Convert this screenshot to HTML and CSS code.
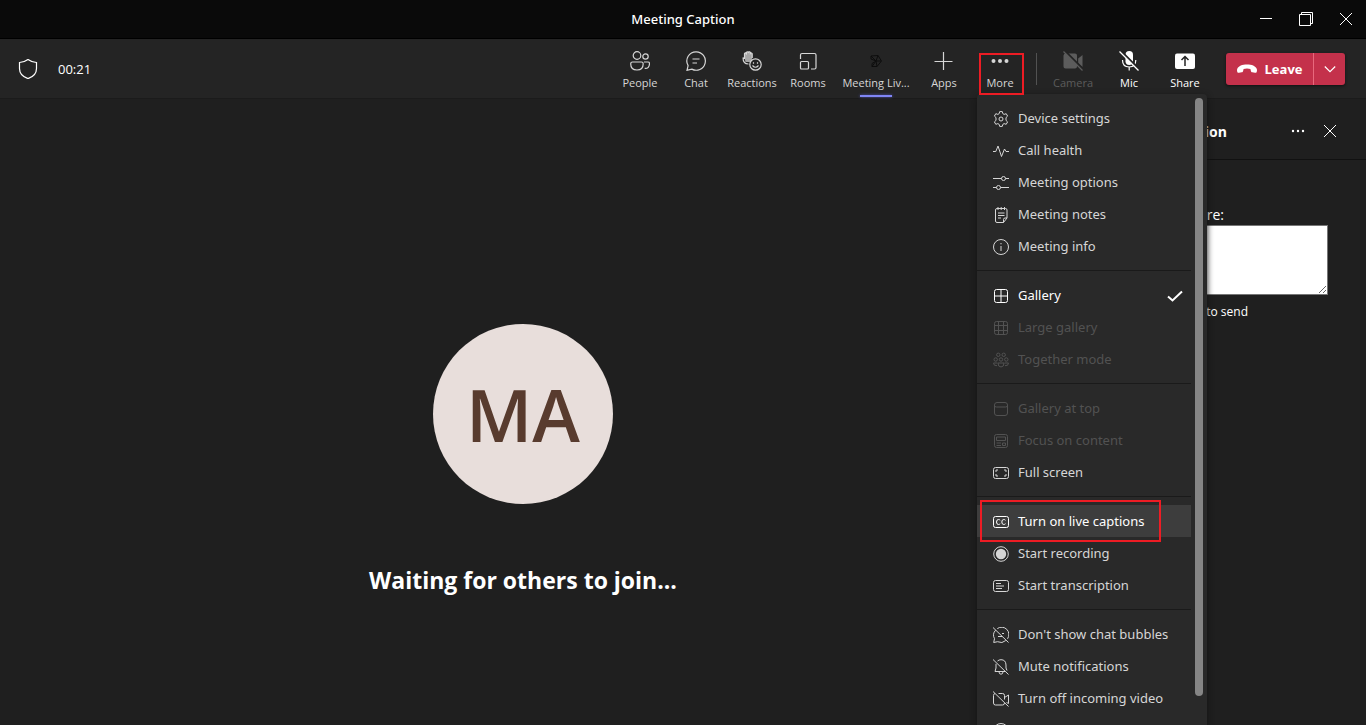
FILE: index.html
```html
<!DOCTYPE html>
<html lang="en">
<head>
<meta charset="utf-8">
<meta name="viewport" content="width=device-width, initial-scale=1">
<title>Meeting Caption</title>
<link rel="stylesheet" href="styles.css">
</head>
<body>
<div class="app">
  <header class="titlebar">
    <h1 class="titlebar-name">Meeting Caption</h1>
    <div class="window-controls">
      <button type="button" class="window-btn" aria-label="Minimize"><svg class="icon-win" viewBox="0 0 16 16"><path d="M2 7.5h12"/></svg></button>
      <button type="button" class="window-btn" aria-label="Restore"><svg class="icon-win" viewBox="0 0 16 16"><path d="M1.500 3.500h11v11h-11zM3.500 3.500v-2h11v11h-2"/></svg></button>
      <button type="button" class="window-btn" aria-label="Close"><svg class="icon-win" viewBox="0 0 16 16"><path d="M2 2l12 12M14 2L2 14"/></svg></button>
    </div>
  </header>

  <div class="toolbar">
    <svg class="icon shield" viewBox="0 0 20 20"><path d="M10 .6c2.400 1.800 5 2.700 8.500 2.900v6c0 5-3.200 8.300-8.500 10.100C4.700 17.800 1.500 14.500 1.500 9.500v-6C5 3.300 7.600 2.400 10 .6z"/></svg>
    <span class="timer">00:21</span>
    <nav class="tools" aria-label="Meeting controls">
      <button type="button" class="tool"><svg class="icon" viewBox="0 0 20 20"><circle cx="7" cy="4.500" r="3.800"/><circle cx="15.500" cy="5.500" r="2.700"/><path d="M2.500 11h9c1 0 1.700.7 1.700 1.700 0 4-2.200 6.300-6.200 6.300S.7 16.700.7 12.700C.7 11.700 1.500 11 2.500 11zM14 11h4c.9 0 1.500.6 1.500 1.500 0 3.300-1.700 5.200-4.800 4.900"/></svg>People</button>
      <button type="button" class="tool"><svg class="icon" viewBox="0 0 20 20"><path d="M10.300.8a9.200 9.200 0 1 1-4.500 17.300L1 19.300l1.100-4.700A9.200 9.200 0 0 1 10.300.8zM6.500 8h7M6.500 12h4.500"/></svg>Chat</button>
      <button type="button" class="tool"><svg class="icon" viewBox="0 0 20 20"><path class="hand" d="M2.500 7V2.500q.9-1.300 1.800 0V1.300q1-1.300 2 0V1q1-1 2 0v1q1-1 1.800.2V8l-1.500 3H3.500z"/><path d="M2.500 8V2.600q.9-1.300 1.900 0v-1.200q1-1.300 2 0q1-1.300 2 0v1.100q1-1.100 1.800.2V7M2.500 7.500L.9 6.800M1 6.500c0 4 2.200 6.500 5.500 6.500"/><circle cx="13.500" cy="13.500" r="5.700"/><path d="M10.500 14.500q3 3.500 6 0M11.500 11.200v1.500M15.500 11.200v1.500"/></svg>Reactions</button>
      <button type="button" class="tool"><svg class="icon" viewBox="0 0 20 20"><path d="M2.500 8V4Q2.500 2.500 4 2.500h12.500Q18 2.500 18 4v12.500q0 1.500-1.500 1.500H13"/><rect x="2.500" y="10.500" width="8" height="7.500" rx="1"/></svg>Rooms</button>
      <button type="button" class="tool tool-wide is-active"><svg class="icon icon-app" viewBox="0 0 20 20"><path d="M5 5l7-.5 3.500 5.500-4.500 5.500H6l4-5.500zM5 5v3l5 2h5M6 15.500v-3l4-2.500 2-5.500M11 15.500L10 10"/></svg>Meeting Liv...</button>
      <button type="button" class="tool"><svg class="icon" viewBox="0 0 20 20"><path d="M9.500 1v18M.5 10.500h18"/></svg>Apps</button>
      <button type="button" class="tool" aria-expanded="true"><svg class="icon" viewBox="0 0 20 20"><g class="solid"><circle cx="3.500" cy="10" r="2"/><circle cx="10" cy="10" r="2"/><circle cx="16.500" cy="10" r="2"/></g></svg>More<span class="mark mark-more"></span></button>
      <span class="separator"></span>
      <button type="button" class="tool" disabled><svg class="icon" viewBox="0 0 20 20"><path class="solid" d="M3 2.500h9q2 0 2 2v11q0 2-2 2H2.500q-2 0-2-2v-11q0-2 2.500-2zM15.200 7.500L19.500 4v12l-4.300-3.500z"/><path class="gap" d="M2 0l19 19"/><path d="M.5.500l19 19"/></svg>Camera</button>
      <button type="button" class="tool tool-bright"><svg class="icon" viewBox="0 0 20 20"><rect class="solid" x="6.500" y="0" width="7.500" height="14" rx="3.700"/><path d="M3.500 9c0 4.500 2.700 7 6.700 7s6.600-2.500 6.600-7M10.200 16v3.500"/><path class="gap" d="M1.500-.5l19 19"/><path d="M.5.500l19 19"/></svg>Mic</button>
      <button type="button" class="tool tool-bright"><svg class="icon" viewBox="0 0 20 20"><rect class="solid" x="0" y="2.500" width="20" height="15.500" rx="2"/><path class="cut" d="M10 15V6M6.500 9L10 5.500 13.500 9"/></svg>Share</button>
    </nav>
    <div class="leave">
      <button type="button" class="leave-main"><svg class="icon" viewBox="0 0 20 20"><path class="solid" d="M10 5.500c4.800 0 8.500 1.500 9.700 4.200.5 1.100.3 2.300 0 3.200-.3.800-.9 1-1.700.9l-2.700-.5c-.8-.2-1.200-.6-1.400-1.400l-.5-1.900c-2-.8-4.800-.8-6.800 0l-.5 1.900c-.2.800-.6 1.200-1.400 1.400L2 13.800c-.8.1-1.400-.1-1.700-.9-.3-.9-.5-2.100 0-3.200C1.500 7 5.200 5.500 10 5.500z"/></svg>Leave</button>
      <button type="button" class="leave-more" aria-label="Leave options"><svg class="icon-chevron" viewBox="0 0 12 12"><path d="M.8 3.500L6 8.700l5.200-5.200"/></svg></button>
    </div>
  </div>

  <main class="content">
    <section class="stage">
      <div class="avatar">MA</div>
      <p class="waiting">Waiting for others to join...</p>
    </section>
    <aside class="panel">
      <div class="panel-head">
        <h2 class="panel-title">Caption</h2>
        <button type="button" class="panel-btn" aria-label="More options"><svg class="icon-win" viewBox="0 0 16 16"><g class="solid"><circle cx="3" cy="8" r="1.200"/><circle cx="8" cy="8" r="1.200"/><circle cx="13" cy="8" r="1.200"/></g></svg></button>
        <button type="button" class="panel-btn" aria-label="Close panel"><svg class="icon-win" viewBox="0 0 16 16"><path d="M2 2l12 12M14 2L2 14"/></svg></button>
      </div>
      <div class="panel-body">
        <label class="panel-label" for="caption">here:</label>
        <textarea class="caption-box" id="caption"></textarea>
        <p class="panel-hint">to send</p>
      </div>
    </aside>
  </main>

  <div class="menu">
    <div class="menu-list" role="menu">
      <button type="button" role="menuitem" class="item"><svg class="icon-menu" viewBox="0 0 16 16"><path d="M6.700.6h2.600l.5 2 1.300.8 2.100-.7 1.400 2.400-1.600 1.500v2.800l1.600 1.500-1.400 2.400-2.100-.7-1.300.8-.5 2H6.700l-.5-2-1.300-.8-2.100.7-1.400-2.400L3 9.400V6.600L1.400 5.100l1.400-2.400 2.100.7 1.300-.8z"/><circle cx="8" cy="8" r="2"/></svg>Device settings</button>
      <button type="button" role="menuitem" class="item"><svg class="icon-menu" viewBox="0 0 16 16"><path d="M0 8.500h2.800L5 3l3.500 10.500L11.500 6l1.500 2.500h3"/></svg>Call health</button>
      <button type="button" role="menuitem" class="item"><svg class="icon-menu" viewBox="0 0 16 16"><path d="M0 3.500h8.500M12.500 3.500H16M0 12.500h3.500M7.500 12.500H16"/><circle cx="10.500" cy="3.500" r="2"/><circle cx="5.500" cy="12.500" r="2"/></svg>Meeting options</button>
      <button type="button" role="menuitem" class="item"><svg class="icon-menu" viewBox="0 0 16 16"><path d="M4 1.500h8.500q1.500 0 1.500 1.500v8L10.500 15.500H4q-1.500 0-1.500-1.500V3Q2.500 1.500 4 1.500zM14 11h-2q-1.500 0-1.500 1.500v3M5 0v3M8.200 0v3M11.500 0v3M5 6h6.500M5 8.500h6.500M5 11h3"/></svg>Meeting notes</button>
      <button type="button" role="menuitem" class="item"><svg class="icon-menu" viewBox="0 0 16 16"><circle cx="8" cy="8" r="7.500"/><path d="M8 7v5M8 4v1.300"/></svg>Meeting info</button>
      <hr class="rule">
      <button type="button" role="menuitemradio" aria-checked="true" class="item item-checked"><svg class="icon-menu" viewBox="0 0 16 16"><rect x="1.500" y="1.500" width="13" height="13" rx="2"/><path d="M8 1.500v13M1.500 8h13"/></svg>Gallery<svg class="icon-menu check" viewBox="0 0 16 16"><path d="M1 8.500L5.500 12.500 15 3.500"/></svg></button>
      <button type="button" role="menuitem" class="item" disabled><svg class="icon-menu" viewBox="0 0 16 16"><rect x="1.500" y="1.500" width="13" height="13" rx="2"/><path d="M5.500 1.500v13M10.500 1.500v13M1.500 5.500h13M1.500 10.500h13"/></svg>Large gallery</button>
      <button type="button" role="menuitem" class="item" disabled><svg class="icon-menu" viewBox="0 0 16 16"><circle cx="5.300" cy="2.800" r="1.700"/><circle cx="10.700" cy="2.800" r="1.700"/><circle cx="2.700" cy="7.500" r="1.700"/><circle cx="8" cy="7.500" r="1.700"/><circle cx="13.300" cy="7.500" r="1.700"/><path d="M4.500 11h-4q0 3 3.500 2.700M11.500 11h4q0 3-3.500 2.700M5 11h6q0 4-3 4t-3-4z"/></svg>Together mode</button>
      <hr class="rule">
      <button type="button" role="menuitem" class="item" disabled><svg class="icon-menu" viewBox="0 0 16 16"><rect x="1.500" y="1.500" width="13" height="13" rx="2.500"/><path d="M1.500 4.500q0 1.500 2 1.500h9q2 0 2-1.500"/></svg>Gallery at top</button>
      <button type="button" role="menuitem" class="item" disabled><svg class="icon-menu" viewBox="0 0 16 16"><rect x="1.500" y="1.500" width="13" height="13" rx="2"/><path d="M3.500 4h9v3.500h-9zM3.500 10H8M3.500 12.500H8M9.500 10h3v2.500h-3z"/></svg>Focus on content</button>
      <button type="button" role="menuitem" class="item"><svg class="icon-menu" viewBox="0 0 16 16"><rect x=".5" y="2.500" width="15" height="11" rx="2"/><path d="M5 5H3v2M11 5h2v2M3 9v2h2M13 9v2h-2"/></svg>Full screen</button>
      <hr class="rule">
      <button type="button" role="menuitem" class="item is-hover"><svg class="icon-menu" viewBox="0 0 16 16"><rect x=".5" y="2.500" width="15" height="11" rx="2"/><path d="M7.200 6.300Q6.500 5.500 5.500 5.500q-2 0-2 2.500t2 2.500q1 0 1.700-.8M12.500 6.300q-.7-.8-1.700-.8-2 0-2 2.500t2 2.500q1 0 1.700-.8"/></svg>Turn on live captions<span class="mark mark-captions"></span></button>
      <button type="button" role="menuitem" class="item"><svg class="icon-menu" viewBox="0 0 16 16"><circle cx="8" cy="8" r="7.300"/><circle class="solid" cx="8" cy="8" r="5.200"/></svg>Start recording</button>
      <button type="button" role="menuitem" class="item"><svg class="icon-menu" viewBox="0 0 16 16"><rect x=".5" y="2.500" width="15" height="11" rx="2"/><path d="M3 5.500h5M3 8h8M3 10.500h6"/></svg>Start transcription</button>
      <hr class="rule">
      <button type="button" role="menuitem" class="item"><svg class="icon-menu" viewBox="0 0 16 16"><path d="M4.300 1.600A7.300 7.300 0 0 1 14.500 11.800M12.800 13.500A7.300 7.300 0 0 1 4.500 14.700L.7 15.500l.8-3.800A7.300 7.300 0 0 1 2.600 3.200M9 6.500h2M5 9.500h4M0 .5l15.500 15"/></svg>Don't show chat bubbles</button>
      <button type="button" role="menuitem" class="item"><svg class="icon-menu" viewBox="0 0 16 16"><path d="M4.500 2Q6 .7 8 .7q4.800 0 5 5.300v3l1 2.500M12 12.500H2L3 9V4.800M6 12.800q0 2.400 2 2.400t2-2.400M0 .5l15.500 15"/></svg>Mute notifications</button>
      <button type="button" role="menuitem" class="item"><svg class="icon-menu" viewBox="0 0 16 16"><path d="M5.500 2.500h4q2 0 2 2v4M11.500 12q0 2-2 2h-7q-2 0-2-2V4.500q0-1.700 1.500-2M11.500 6.500l4-2.500v8.500l-2-1M0 .5l15.500 15"/></svg>Turn off incoming video</button>
      <button type="button" role="menuitem" class="item" aria-label="Help"><svg class="icon-menu" viewBox="0 0 16 16"><circle cx="8" cy="8" r="7.500"/></svg></button>
    </div>
    <div class="scroll-track"><div class="scroll-thumb"></div></div>
  </div>
</div>
</body>
</html>
```

FILE: styles.css
```css
* { box-sizing: border-box; }

body {
  margin: 0;
  background: #1f1f1f;
  color: #fff;
  font-family: "Open Sans", "Noto Sans", sans-serif;
  font-size: 13px;
}

h1, h2, p { margin: 0; }

button {
  margin: 0;
  padding: 0;
  border: 0;
  background: none;
  color: inherit;
  font: inherit;
}

svg {
  flex: none;
  fill: none;
  stroke: currentColor;
  stroke-width: 1.2;
}

.solid { fill: currentColor; stroke: none; }
.gap { stroke: #242424; stroke-width: 2; }
.cut { stroke: #242424; stroke-width: 1.5; }
.hand { fill: #a6a6a6; stroke: none; }

.app {
  position: relative;
  display: flex;
  flex-direction: column;
  height: 100vh;
  overflow: hidden;
}

/* Title bar */
.titlebar {
  display: grid;
  grid-template-columns: 1fr auto 1fr;
  align-items: center;
  height: 39px;
  flex: none;
  background: #0a0a0a;
  border-bottom: 1px solid #000;
}
.titlebar-name {
  grid-column: 2;
  font-family: "Noto Sans", sans-serif;
  font-size: 13px;
  font-weight: 500;
}
.window-controls { display: flex; justify-content: flex-end; }
.window-btn { display: grid; place-items: center; width: 40px; height: 38px; }
.icon-win { width: 16px; height: 16px; stroke-width: 1; }

/* Toolbar */
.toolbar {
  display: flex;
  align-items: center;
  flex: none;
  height: 60px;
  padding: 0 21px 0 18px;
  background: #242424;
  border-bottom: 1px solid #1b1b1b;
}
.icon { width: 20px; height: 20px; }
.timer { margin-left: 20px; font-size: 13px; }
.tools { display: flex; height: 100%; margin-left: auto; }
.tool {
  position: relative;
  display: flex;
  flex-direction: column;
  align-items: center;
  gap: 4px;
  width: 56px;
  padding-top: 12px;
  color: #d6d6d6;
  font-size: 11px;
  line-height: 16px;
  white-space: nowrap;
}
.tool-wide { width: 80px; }
.tool-bright { color: #fff; }
.tool:disabled { color: #5c5c5c; }
.icon-app { color: #0d0d0d; stroke-width: 1; }
.is-active::after {
  content: "";
  position: absolute;
  bottom: 1px;
  width: 32px;
  height: 2px;
  background: #7f85f5;
  box-shadow: 0 0 3px #4f52b2;
}
.separator { width: 1px; height: 32px; margin: 14px 8px; background: #525252; }
.leave {
  display: flex;
  height: 32px;
  margin-left: 13px;
  border-radius: 3px;
  background: #c4314b;
  box-shadow: 0 1px 3px #111;
}
.leave-main {
  display: flex;
  align-items: center;
  justify-content: center;
  gap: 8px;
  width: 87px;
  font-weight: 700;
}
.leave-more {
  display: grid;
  place-items: center;
  width: 32px;
  border-left: 1px solid #e8697d;
}
.icon-chevron { width: 12px; height: 12px; }

/* Stage and side panel */
.content { display: flex; flex: 1; min-height: 0; }
.stage {
  display: flex;
  flex: 1;
  flex-direction: column;
  align-items: center;
  justify-content: center;
  gap: 60px;
  padding-top: 96px;
}
.avatar {
  display: grid;
  place-items: center;
  width: 180px;
  height: 180px;
  border-radius: 50%;
  background: #e8dedb;
  color: #583b2e;
  font-size: 72px;
  font-weight: 600;
}
.waiting { font-size: 23px; font-weight: 700; line-height: 32px; }

.panel { width: 320px; }
.panel-head {
  display: flex;
  align-items: center;
  height: 61px;
  padding: 4px 20px 0 0;
  border-bottom: 1px solid #111;
}
.panel-title {
  width: 181px;
  margin-right: auto;
  font-size: 14px;
  font-weight: 700;
  text-align: right;
}
.panel-btn { display: grid; place-items: center; width: 32px; height: 32px; }
.panel-body { padding: 45px 38px 0 20px; }
.panel-label {
  display: block;
  width: 158px;
  font-size: 14px;
  line-height: 20px;
  text-align: right;
}
.caption-box {
  display: block;
  width: 100%;
  height: 70px;
  border: 1px solid #767676;
  background: #fff;
}
.panel-hint {
  width: 182px;
  margin-top: 8px;
  font-size: 12px;
  line-height: 18px;
  text-align: right;
}

/* Overflow menu, laid over the stage and panel */
.menu {
  position: absolute;
  top: 94px;
  right: 159px;
  bottom: 0;
  display: flex;
  width: 230px;
  overflow: hidden;
  border-radius: 4px 4px 0 0;
  background: #292929;
  box-shadow: 0 2px 6px #141414;
  font-family: "Noto Sans", sans-serif;
}
.menu-list { width: 214px; padding-top: 8px; }
.item {
  position: relative;
  display: flex;
  align-items: center;
  gap: 9px;
  width: 100%;
  height: 32px;
  padding: 0 8px 0 16px;
  color: #d6d6d6;
  text-align: left;
  white-space: nowrap;
}
.item:disabled { color: #525252; }
.item-checked, .is-hover { color: #fff; }
.is-hover { background: #3d3d3d; }
.icon-menu { width: 16px; height: 16px; margin-top: 2px; stroke-width: 1; }
.check { margin-left: auto; stroke-width: 2; }
.rule { height: 1px; margin: 8px 0; border: 0; background: #1a1a1a; }
.scroll-track { width: 8px; margin: 4px; }
.scroll-thumb { height: 96%; border-radius: 4px; background: #858585; }

/* Highlight frames */
.mark { position: absolute; z-index: 1; height: 42px; border: 2px solid #ed1c24; }
.mark-more { top: 14px; left: 7px; width: 45px; }
.mark-captions { top: -5px; left: 3px; width: 181px; }
```
